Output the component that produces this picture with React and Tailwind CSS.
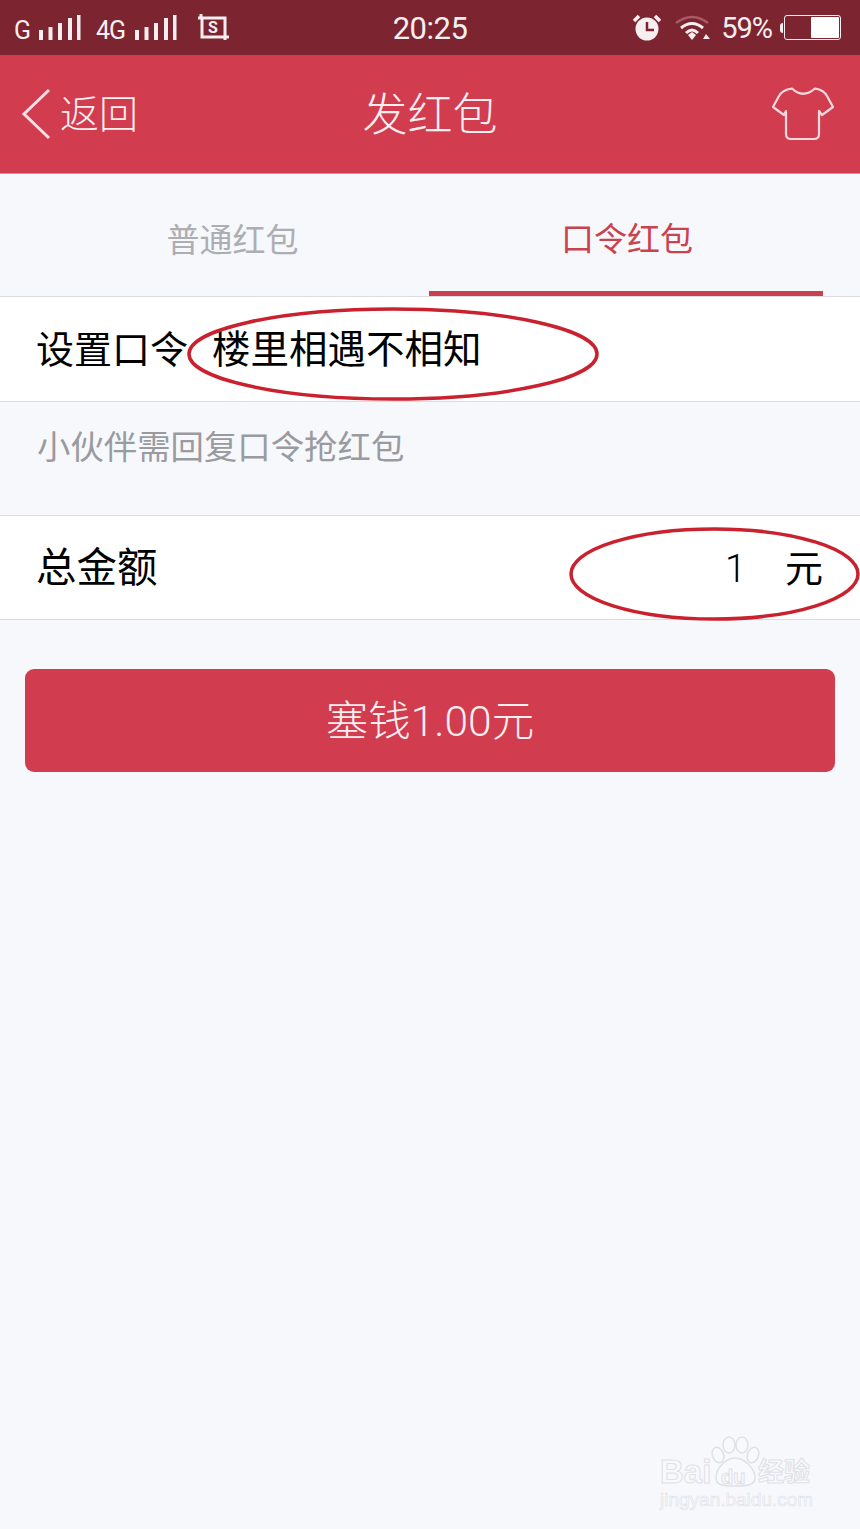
const cjk = "font-['Liberation_Sans','Noto_Sans_CJK_SC',sans-serif]";

function Signal() {
  return (
    <svg width="42" height="26" viewBox="0 0 42 26" fill="#f6eef0">
      <rect x="0" y="15" width="4" height="10" />
      <rect x="9.5" y="12" width="4" height="13" />
      <rect x="19" y="8" width="4" height="17" />
      <rect x="29" y="3" width="4" height="22" />
      <rect x="38" y="0" width="3.5" height="25" />
    </svg>
  );
}

function StatusBar() {
  return (
    <div className="h-[55px] bg-[#7c2530] text-[#f6eef0] flex items-center relative shrink-0 font-['Roboto',sans-serif]">
      <div className="flex items-center pl-[14px]">
        <span className="text-[25px] w-[25px] mt-[6px] leading-none">G</span>
        <Signal />
        <span className="text-[25px] ml-[15px] w-[39px] mt-[6px] leading-none tracking-[-1px]">4G</span>
        <Signal />
        {/* screenshot icon */}
        <svg className="ml-[21px] mt-[1px]" width="32" height="28" viewBox="0 0 32 28" fill="none" stroke="#f6eef0">
          <path d="M3 0 V4 H27 V26 M0 4 H4 V23 H31" strokeWidth="3" />
          <text x="10" y="19" fontSize="16" fontWeight="700" fill="#f6eef0" stroke="none" fontFamily="Roboto">S</text>
        </svg>
      </div>
      <div className="absolute left-0 right-0 text-center text-[31px] tracking-[-0.5px] mt-[4px]">20:25</div>
      <div className="ml-auto flex items-center pr-[19px]">
        {/* alarm */}
        <svg width="28" height="28" viewBox="0 0 28 28">
          <circle cx="14" cy="15" r="11.5" fill="#f6eef0" />
          <path d="M1 7 L6 2 M27 7 L22 2" stroke="#f6eef0" strokeWidth="3.5" />
          <path d="M14 8 V16 H21" stroke="#7c2530" strokeWidth="2.5" fill="none" />
        </svg>
        {/* wifi */}
        <svg className="ml-[14px]" width="38" height="28" viewBox="0 0 38 28" fill="none">
          <path d="M1 9 Q17 -3 33 9" stroke="#a85a66" strokeWidth="2.5" />
          <path d="M6 14 Q17 5 28 14" stroke="#f6eef0" strokeWidth="3" />
          <path d="M11 19 Q17 13 23 19" stroke="#f6eef0" strokeWidth="3" />
          <path d="M13 21 L17 18 L21 21 L17 26 Z" fill="#f6eef0" />
          <path d="M31 20 L35 25 H28 Z" fill="#f6eef0" />
        </svg>
        <span className="ml-[8px] text-[29px] tracking-[-1px] leading-none mt-[2px]">59%</span>
        {/* battery */}
        <div className="ml-[8px] w-[3px] h-[10px] bg-[#f6eef0] rounded-l-sm" />
        <div className="ml-[1px] w-[57px] h-[25px] border border-[#f6eef0] rounded-[3px] p-[1px] flex justify-end">
          <div className="w-[28px] bg-white rounded-[1px]" />
        </div>
      </div>
    </div>
  );
}

function NavBar() {
  return (
    <div className="h-[119px] bg-[#d13c4f] text-[#fbeef0] flex items-center relative shrink-0 border-b border-[#d98c99]">
      <svg className="ml-[21px]" width="30" height="52" viewBox="0 0 30 52" fill="none" stroke="#f8dfe3" strokeWidth="3">
        <path d="M28 2 L3 26 L28 50" />
      </svg>
      <span className="ml-[9px] text-[39px] font-light leading-none">返回</span>
      <div className="absolute left-0 right-0 text-center text-[45px] font-light leading-none mt-[3px]">发红包</div>
      <svg className="ml-auto mr-[26px]" width="62" height="54" viewBox="0 0 62 54" fill="none" stroke="#f6d9dd" strokeWidth="2.2" strokeLinejoin="round">
        <path d="M20 1.5 Q31 12 43 1.5 Q52 3 55 9 L61 20 L50 28 L47 24 V47 Q47 52 42 52 H19 Q14 52 14 47 V24 L12 28 L1 20 L7 9 Q10 3 20 1.5 Z" />
      </svg>
    </div>
  );
}

function Tabs() {
  return (
    <div className="h-[123px] flex shrink-0 border-b border-[#dcdde3] text-[33px]">
      <div className="w-[429px] flex items-center justify-center pl-[36px] pt-[11px] text-[#adaeb2]">普通红包</div>
      <div className="w-[394px] flex items-center justify-center pl-[2px] pt-[14px] text-[#c9434f] border-b-[5px] border-[#c9404f]">口令红包</div>
    </div>
  );
}

// hand-drawn red circle over a row
function Ellipse({ className, width, height }) {
  return (
    <svg className={className} width={width} height={height} viewBox={`0 0 ${width} ${height}`} fill="none" stroke="#c9212e" strokeWidth="3.5">
      <ellipse cx={width / 2} cy={height / 2} rx={width / 2 - 2} ry={height / 2 - 2} />
    </svg>
  );
}

function Watermark() {
  return (
    <div className="absolute left-[660px] top-[1436px] w-[155px] h-[76px] text-[#f8f9fd] [-webkit-text-stroke:1px_#dfe1e7]">
      <svg className="absolute left-[51px] top-0" width="50" height="54" viewBox="0 0 50 54" fill="#f8f9fd" stroke="#dfe1e7" strokeWidth="1.5">
        <ellipse cx="7" cy="19" rx="5.5" ry="8" transform="rotate(-20 7 19)" />
        <ellipse cx="18" cy="9" rx="6" ry="8" />
        <ellipse cx="31" cy="9" rx="6" ry="8" />
        <ellipse cx="42" cy="19" rx="5.5" ry="8" transform="rotate(20 42 19)" />
        <path d="M24 22 C33 22 44 32 44 42 C44 50 34 50 24 50 C14 50 5 50 5 42 C5 32 15 22 24 22 Z" />
      </svg>
      <span className="absolute left-0 top-[19px] text-[33px] leading-none font-['Liberation_Sans',sans-serif] font-bold">Bai</span>
      <span className="absolute left-[61px] top-[31px] text-[20px] leading-none font-['Liberation_Sans',sans-serif] font-bold">du</span>
      <span className="absolute left-[98px] top-[21px] text-[26px] leading-none font-['Noto_Sans_CJK_SC',sans-serif] font-bold">经验</span>
      <span className="absolute left-0 top-[54px] text-[19px] leading-none whitespace-nowrap font-['Liberation_Sans',sans-serif] [-webkit-text-stroke:0.6px_#dfe1e7]">jingyan.baidu.com</span>
    </div>
  );
}

export default function App() {
  return (
    <div className={`relative w-[860px] h-[1529px] overflow-hidden flex flex-col bg-[#f7f8fc] ${cjk}`}>
      <StatusBar />
      <NavBar />
      <Tabs />

      {/* password row */}
      <div className="h-[105px] shrink-0 bg-white border-b border-[#dcdde3] flex items-center pl-[36px] text-[38px] text-black relative">
        <span className="leading-none mt-[2px]">设置口令</span>
        <span className="ml-[24px] leading-none mt-[2px] text-[38.5px]">楼里相遇不相知</span>
        <Ellipse className="absolute left-[187px] top-[10px]" width={412} height={94} />
      </div>

      <div className="h-[113px] shrink-0 pl-[37px] pt-[29px] text-[33.4px] leading-none text-[#9a9b9f]">
        小伙伴需回复口令抢红包
      </div>

      {/* amount row */}
      <div className="h-[105px] shrink-0 bg-white border-y border-[#dcdde3] flex items-center pl-[36px] pr-[37px] text-[40.5px] text-black relative">
        <span className="leading-none mt-[2px]">总金额</span>
        <span className="ml-auto leading-none mt-[3px] text-[38px] font-['Roboto',sans-serif] font-light">1</span>
        <span className="ml-[39px] leading-none mt-[3px] text-[38px]">元</span>
        <Ellipse className="absolute left-[569px] top-[11px]" width={291} height={94} />
      </div>

      <button className="mt-[49px] mx-[25px] h-[103px] shrink-0 rounded-[9px] bg-[#d13c4f] text-[#fbeef0] text-[42.5px] font-light leading-none pt-[4px] font-['Roboto','Noto_Sans_CJK_SC',sans-serif]">
        塞钱1.00元
      </button>

      <Watermark />
    </div>
  );
}
